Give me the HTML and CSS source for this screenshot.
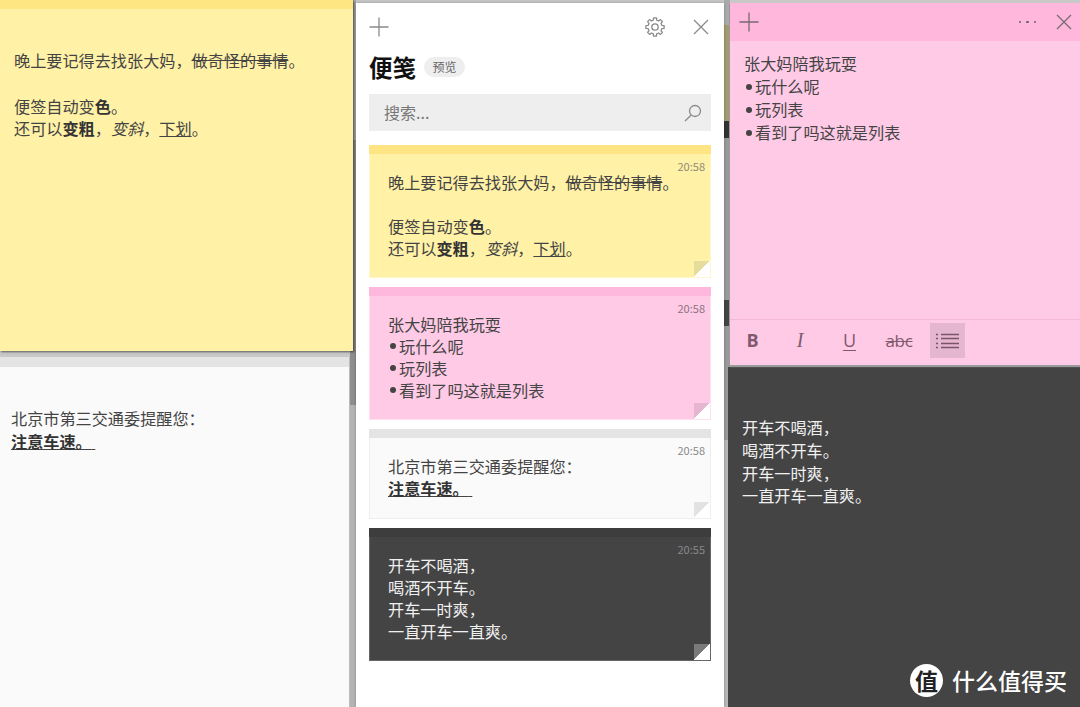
FILE: index.html
```html
<!DOCTYPE html>
<html lang="zh-CN">
<head>
<meta charset="utf-8">
<title>便笺</title>
<link rel="stylesheet" href="styles.css">
</head>
<body>
<div class="desktop">
  <div class="strip strip-left"></div>
  <div class="strip strip-right"></div>

  <section class="window win-white">
    <div class="thin-bar"></div>
    <div class="win-text">
      <p>北京市第三交通委提醒您：</p>
      <p><u><b>注意车速。</b>&nbsp;</u></p>
    </div>
  </section>

  <section class="window win-yellow">
    <div class="thin-bar"></div>
    <div class="win-text">
      <p>晚上要记得去找张大妈，<s>做奇怪的事情</s>。</p>
      <p>&nbsp;</p>
      <p>便签自动变<b>色</b>。</p>
      <p>还可以<b>变粗</b>，<i>变斜</i>，<u>下划</u>。</p>
    </div>
  </section>

  <section class="window win-dark">
    <div class="win-text">
      <p>开车不喝酒，</p>
      <p>喝酒不开车。</p>
      <p>开车一时爽，</p>
      <p>一直开车一直爽。</p>
    </div>
    <div class="brand">
      <span class="brand-mark">值</span>
      <span class="brand-name">什么值得买</span>
    </div>
  </section>

  <section class="window win-panel">
    <header class="panel-top">
      <svg class="ico" width="20" height="20" viewBox="0 0 20 20"><path d="M10 .5v19M.5 10h19" class="st"/></svg>
      <div class="panel-actions">
        <svg class="ico" width="20" height="20" viewBox="0 0 20 20"><path class="st" stroke-linejoin="round" d="M8.3 3.2L8.6.9H11.4L11.7 3.2L13.6 4L15.4 2.6L17.4 4.6L16 6.4L16.8 8.3L19.1 8.6V11.4L16.8 11.7L16 13.6L17.4 15.4L15.4 17.4L13.6 16L11.7 16.8L11.4 19.1H8.6L8.3 16.8L6.4 16L4.6 17.4L2.6 15.4L4 13.6L3.2 11.7L.9 11.4V8.6L3.2 8.3L4 6.4L2.6 4.6L4.6 2.6L6.4 4Z"/><circle class="st" cx="10" cy="10" r="3.2"/></svg>
        <svg class="ico" width="16" height="16" viewBox="0 0 16 16"><path d="M1 1l14 14M15 1L1 15" class="st"/></svg>
      </div>
    </header>
    <div class="panel-title">
      <h1>便笺</h1>
      <span class="pill">预览</span>
    </div>
    <div class="search">
      <span class="search-label">搜索...</span>
      <svg width="18" height="18" viewBox="0 0 18 18"><circle class="st" cx="11" cy="7" r="5.5"/><path class="st" d="M7 11.2L1 17"/></svg>
    </div>
    <div class="cards">
      <article class="card card-yellow">
        <div class="card-bar"></div>
        <time>20:58</time>
        <div class="card-text">
          <p>晚上要记得去找张大妈，<s>做奇怪的事情</s>。</p>
          <p>&nbsp;</p>
          <p>便签自动变<b>色</b>。</p>
          <p>还可以<b>变粗</b>，<i>变斜</i>，<u>下划</u>。</p>
        </div>
        <span class="fold"></span>
      </article>
      <article class="card card-pink">
        <div class="card-bar"></div>
        <time>20:58</time>
        <div class="card-text">
          <p>张大妈陪我玩耍</p>
          <ul>
            <li>玩什么呢</li>
            <li>玩列表</li>
            <li>看到了吗这就是列表</li>
          </ul>
        </div>
        <span class="fold"></span>
      </article>
      <article class="card card-white">
        <div class="card-bar"></div>
        <time>20:58</time>
        <div class="card-text">
          <p>北京市第三交通委提醒您：</p>
          <p><u><b>注意车速。</b>&nbsp;</u></p>
        </div>
        <span class="fold"></span>
      </article>
      <article class="card card-dark">
        <div class="card-bar"></div>
        <time>20:55</time>
        <div class="card-text">
          <p>开车不喝酒，</p>
          <p>喝酒不开车。</p>
          <p>开车一时爽，</p>
          <p>一直开车一直爽。</p>
        </div>
        <span class="fold"></span>
      </article>
    </div>
  </section>

  <section class="window win-pink">
    <header class="pink-top">
      <svg class="ico" width="20" height="20" viewBox="0 0 20 20"><path d="M10 .5v19M.5 10h19" class="st"/></svg>
      <div class="pink-actions">
        <span class="dots"><i></i><i></i><i></i></span>
        <svg class="ico" width="16" height="16" viewBox="0 0 16 16"><path d="M1 1l14 14M15 1L1 15" class="st"/></svg>
      </div>
    </header>
    <div class="pink-text">
      <p>张大妈陪我玩耍</p>
      <ul>
        <li>玩什么呢</li>
        <li>玩列表</li>
        <li>看到了吗这就是列表</li>
      </ul>
    </div>
    <footer class="toolbar">
      <span class="tool tool-b">B</span>
      <span class="tool tool-i">I</span>
      <span class="tool tool-u">U</span>
      <span class="tool tool-s">abc</span>
      <span class="tool tool-list">
        <svg width="23" height="16" viewBox="0 0 23 16"><path d="M0 1.5h2M5 1.5h18M0 5.5h2M5 5.5h18M0 10.5h2M5 10.5h18M0 14.5h2M5 14.5h18" fill="none" stroke="#7a5468" stroke-width="1.5"/></svg>
      </span>
    </footer>
  </section>
</div>
</body>
</html>
```

FILE: styles.css
```css
* { box-sizing: border-box; }
html, body { margin: 0; height: 100%; }
body {
  font-family: "Noto Sans CJK SC", "Noto Sans", sans-serif;
  font-size: 16.15px;
  color: #444;
  overflow: hidden;
}
p, h1, ul { margin: 0; padding: 0; }
ul { list-style: none; }
li { display: flex; align-items: center; }
li::before {
  content: "";
  width: 6px;
  height: 6px;
  margin: 0 3px 0 2px;
  border-radius: 50%;
  background: #444;
}
b { font-weight: 700; color: #333; }
s, u { text-decoration-thickness: 1px; }
.st { fill: none; stroke: #8a8a8a; stroke-width: 1.3; }

.desktop {
  position: relative;
  width: 1080px;
  height: 707px;
  background: #c8c8c8;
  overflow: hidden;
}
.strip { position: absolute; top: 0; bottom: 0; }
.strip-left {
  left: 350px;
  width: 6px;
  background: linear-gradient(to bottom, #a8a8a8 0, #a8a8a8 140px, #8e8e8e 140px, #8e8e8e 405px, #b4b4b4 405px, #b4b4b4 100%);
}
.strip-right {
  left: 724px;
  width: 6px;
  background: linear-gradient(to bottom, #aaa 0, #aaa 25px, #a39a70 25px, #a39a70 121px, #333 121px, #333 138px, #9a9a9a 138px, #9a9a9a 300px, #444 300px, #444 326px, #9a9a9a 326px, #9a9a9a 440px, #b8b8b8 440px, #b8b8b8 100%);
}

.window { position: absolute; display: flex; flex-direction: column; }
.thin-bar { height: 9px; flex: none; }
.win-text { line-height: 22.8px; }

.win-yellow {
  left: 0; top: 0;
  width: 353px; height: 351px;
  background: #fff1a6;
  box-shadow: 1px 1px 2px rgba(0,0,0,.55);
}
.win-yellow .thin-bar { background: #fee682; }
.win-yellow .win-text { padding: 40px 0 0 14px; }

.win-white {
  left: 0; top: 357px;
  width: 350px; height: 350px;
  background: #fafafa;
  border-right: 1px solid #bbb;
}
.win-white .thin-bar { height: 10px; background: #e4e4e4; }
.win-white .win-text { padding: 40px 0 0 11px; }

.win-dark {
  left: 728px; top: 367px;
  width: 352px; height: 340px;
  background: #444;
  color: #f0f0f0;
}
.win-dark .win-text { padding: 49px 0 0 14px; }
.brand {
  display: flex;
  align-items: center;
  gap: 9px;
  margin-top: auto;
  padding: 0 12px 10px 182px;
  color: #fff;
}
.brand-mark {
  width: 33px; height: 33px;
  border-radius: 50%;
  background: #fff;
  color: #222;
  font-family: "Noto Sans CJK JP", sans-serif;
  font-weight: 700;
  font-size: 23px;
  line-height: 33px;
  text-align: center;
}
.brand-name { font-size: 23px; font-weight: 500; line-height: 33px; }

.win-panel {
  left: 356px; top: 3px;
  width: 368px; height: 704px;
  background: #fff;
  padding: 0 13px;
  box-shadow: 0 0 3px rgba(0,0,0,.25);
}
.panel-top {
  display: flex;
  align-items: center;
  justify-content: space-between;
  height: 20px;
  margin-top: 14px;
}
.panel-actions { display: flex; align-items: center; gap: 28px; padding-right: 2px; }
.ico { display: block; }
.panel-title { display: flex; align-items: center; gap: 8px; margin-top: 9px; height: 42px; }
.panel-title h1 { font-size: 23.5px; font-weight: 700; color: #111; line-height: 42px; }
.pill {
  width: 41px; height: 20px;
  border-radius: 10px;
  background: #eee;
  color: #666;
  font-size: 12px;
  line-height: 20px;
  text-align: center;
}
.search {
  display: flex;
  align-items: center;
  justify-content: space-between;
  height: 37px;
  margin-top: 6px;
  padding: 0 9px 0 15px;
  background: #eee;
  color: #777;
  font-size: 16px;
}
.search-label { margin-top: -2px; }
.cards { display: flex; flex-direction: column; gap: 9px; margin-top: 14px; }
.card {
  position: relative;
  height: 133px;
  border: 1px solid transparent;
  border-top: 0;
}
.card-bar { height: 9px; margin: 0 -1px; }
.card time {
  display: block;
  height: 14px;
  margin-top: 5px;
  padding-right: 5px;
  text-align: right;
  font-size: 11px;
  line-height: 14px;
  color: #8c8a76;
}
.card-text { margin-top: -2px; padding-left: 18px; line-height: 22px; }
.fold {
  position: absolute;
  right: 0; bottom: 0;
  width: 16px; height: 16px;
  background: linear-gradient(to bottom right, #e6dc9c 0, #e6dc9c 50%, #fff 50%, #fff 100%);
}
.card-yellow { background: #fff1a6; border-color: #fff6cc; }
.card-yellow .card-bar { background: #fee483; }
.card-pink { background: #ffcae6; border-color: #ffe0f0; }
.card-pink .card-bar { background: #ffb8dd; }
.card-pink .fold { background: linear-gradient(to bottom right, #e6b6d0 0, #e6b6d0 50%, #fff 50%, #fff 100%); }
.card-pink time { color: #8a7380; }
.card-white { height: 90px; background: #fafafa; border-color: #eee; }
.card-white .card-bar { background: #e4e4e4; }
.card-white .fold { background: linear-gradient(to bottom right, #e2e2e2 0, #e2e2e2 50%, #fff 50%, #fff 100%); }
.card-white time { color: #888; }
.card-dark { background: #444; color: #f0f0f0; border-color: #666; }
.card-dark .card-bar { background: #3d3d3d; }
.card-dark .fold { background: linear-gradient(to bottom right, #7a7a7a 0, #7a7a7a 50%, #fff 50%, #fff 100%); }
.card-dark time { color: #8a8a8a; }

.win-pink {
  left: 730px; top: 3px;
  width: 350px; height: 362px;
  background: #ffcae6;
  box-shadow: -1px 1px 0 #9a9a9a, 0 2px 1px #9a9a9a;
}
.pink-top {
  display: flex;
  align-items: center;
  justify-content: space-between;
  flex: none;
  height: 38px;
  padding: 0 8px 0 9px;
  background: #ffb7dc;
}
.pink-top .st, .win-pink .st { stroke: #776a72; }
.pink-actions { display: flex; align-items: center; gap: 20px; }
.dots { display: flex; gap: 5px; }
.dots i { width: 2.5px; height: 2.5px; border-radius: 50%; background: #6d5f67; }
.pink-text { flex: 1; padding: 11px 0 0 14px; line-height: 23px; }
.toolbar {
  display: flex;
  align-items: center;
  flex: none;
  height: 46px;
  padding: 0 0 4px 15px;
  border-top: 1px solid #f2b8d6;
  color: #7f5a6e;
}
.tool { display: block; text-align: center; font-family: "Open Sans", sans-serif; line-height: 35px; }
.tool-b { width: 15px; font-weight: 700; font-size: 18px; }
.tool-i { width: 14px; margin-left: 33px; font-family: "Liberation Serif", serif; font-style: italic; font-size: 20px; }
.tool-u { width: 15px; margin-left: 35px; font-size: 18px; text-decoration: underline; text-decoration-thickness: 1px; text-underline-offset: 3px; }
.tool-s { width: 32px; margin-left: 26px; font-size: 17px; text-decoration: line-through; text-decoration-thickness: 1px; letter-spacing: -.3px; }
.tool-list {
  display: flex; align-items: center; justify-content: center;
  width: 35px; height: 35px;
  margin-left: 15px;
  background: #e5b6d0;
}
```
